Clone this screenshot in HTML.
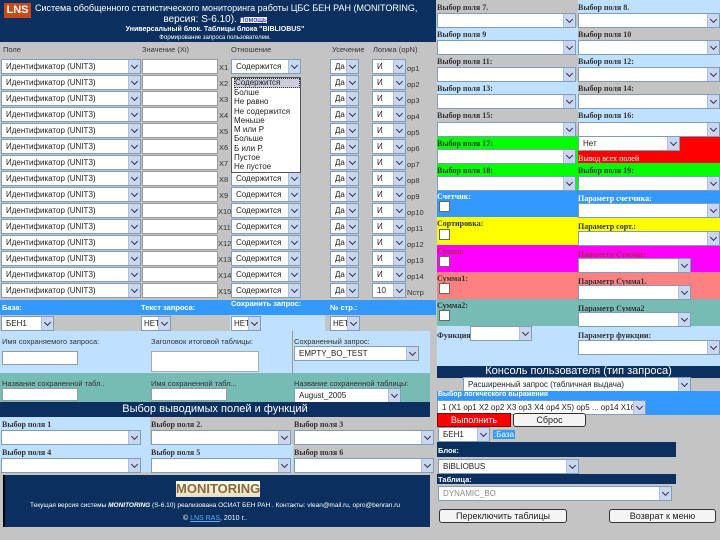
<!DOCTYPE html>
<html><head><meta charset="utf-8"><style>
*{margin:0;padding:0;box-sizing:border-box}
body{width:720px;height:540px;position:relative;overflow:hidden;background:#c4c4c4;font-family:"Liberation Sans","DejaVu Sans",sans-serif;font-size:8px;color:#222}
div,span{position:absolute}
.s{background:#fff;border:1px solid #7f9db9;height:15px;font-size:8px;line-height:13px;padding-left:4px;white-space:nowrap;overflow:hidden;color:#222}
.s i{position:absolute;right:0;top:0;width:12px;height:13px;background:#c8d6f0;border-left:1px solid #b0c0dc}
.s i:after{content:"";position:absolute;left:3px;top:3px;width:4px;height:4px;border-right:1.5px solid #334;border-bottom:1.5px solid #334;transform:rotate(45deg)}
.in{background:#fff;border:1px solid #999;height:15px}
.l{font-size:7.5px;white-space:nowrap;color:#333}
.sf{font-family:"Liberation Serif",serif;font-weight:bold;font-size:8px;color:#333;white-space:nowrap}
.navy{background:#0b2f5e}
.gr{background:#c4c4c4}.lb{background:#c0e0ff}
.cb{background:#fff;border:1px solid #666;width:11px;height:11px}
.btn{background:#f4f4f4;border:1px solid #333;border-radius:3px;font-size:9px;text-align:center;line-height:12px;height:14px}
</style></head><body>
<div class="navy" style="left:0;top:0;width:430px;height:42px"></div>
<div style="left:4px;top:3px;width:27px;height:15px;background:#c84a1a;color:#fff;font-weight:bold;font-size:11px;line-height:15px;text-align:center">LNS</div>
<div style="left:35px;top:3px;color:#fff;font-size:9px;white-space:nowrap">Система обобщенного статистического мониторинга работы ЦБС БЕН РАН (MONITORING,</div>
<div style="left:0;top:14px;width:430px;text-align:center;color:#fff;font-size:10px">версия: S-6.10). <span style="position:static;background:#fff;color:#00c;font-size:7px;text-decoration:underline">Помощь</span></div>
<div style="left:0;top:26px;width:430px;text-align:center;color:#fff;font-size:7px;font-weight:bold">Универсальный блок. Таблицы блока "BIBLIOBUS"</div>
<div style="left:0;top:35px;width:430px;text-align:center;color:#fff;font-size:6px">Формирование запроса пользователем.</div>
<div class="l" style="left:3px;top:45px">Поле</div>
<div class="l" style="left:142px;top:45px">Значение (Xi)</div>
<div class="l" style="left:231px;top:45px">Отношение</div>
<div class="l" style="left:332px;top:45px">Усечение</div>
<div class="l" style="left:373px;top:45px">Логика (opN)</div>

<div style="left:0;top:59px">
<div class="s" style="left:1px;top:0;width:140px">Идентификатор (UNIT3)<i></i></div><div class="in" style="left:142px;top:0;width:76px"></div><div class="l" style="left:219px;top:4px">X1</div><div class="s" style="left:231px;top:0;width:70px">Содержится<i></i></div><div class="s" style="left:330px;top:0;width:29px">Да<i></i></div><div class="s" style="left:372px;top:0;width:34px">И<i></i></div><div class="l" style="left:407px;top:5px">op1</div>
</div>
<div style="left:0;top:75px">
<div class="s" style="left:1px;top:0;width:140px">Идентификатор (UNIT3)<i></i></div><div class="in" style="left:142px;top:0;width:76px"></div><div class="l" style="left:219px;top:4px">X2</div><div class="s" style="left:330px;top:0;width:29px">Да<i></i></div><div class="s" style="left:372px;top:0;width:34px">И<i></i></div><div class="l" style="left:407px;top:5px">op2</div>
</div>
<div style="left:0;top:91px">
<div class="s" style="left:1px;top:0;width:140px">Идентификатор (UNIT3)<i></i></div><div class="in" style="left:142px;top:0;width:76px"></div><div class="l" style="left:219px;top:4px">X3</div><div class="s" style="left:330px;top:0;width:29px">Да<i></i></div><div class="s" style="left:372px;top:0;width:34px">И<i></i></div><div class="l" style="left:407px;top:5px">op3</div>
</div>
<div style="left:0;top:107px">
<div class="s" style="left:1px;top:0;width:140px">Идентификатор (UNIT3)<i></i></div><div class="in" style="left:142px;top:0;width:76px"></div><div class="l" style="left:219px;top:4px">X4</div><div class="s" style="left:330px;top:0;width:29px">Да<i></i></div><div class="s" style="left:372px;top:0;width:34px">И<i></i></div><div class="l" style="left:407px;top:5px">op4</div>
</div>
<div style="left:0;top:123px">
<div class="s" style="left:1px;top:0;width:140px">Идентификатор (UNIT3)<i></i></div><div class="in" style="left:142px;top:0;width:76px"></div><div class="l" style="left:219px;top:4px">X5</div><div class="s" style="left:330px;top:0;width:29px">Да<i></i></div><div class="s" style="left:372px;top:0;width:34px">И<i></i></div><div class="l" style="left:407px;top:5px">op5</div>
</div>
<div style="left:0;top:139px">
<div class="s" style="left:1px;top:0;width:140px">Идентификатор (UNIT3)<i></i></div><div class="in" style="left:142px;top:0;width:76px"></div><div class="l" style="left:219px;top:4px">X6</div><div class="s" style="left:330px;top:0;width:29px">Да<i></i></div><div class="s" style="left:372px;top:0;width:34px">И<i></i></div><div class="l" style="left:407px;top:5px">op6</div>
</div>
<div style="left:0;top:155px">
<div class="s" style="left:1px;top:0;width:140px">Идентификатор (UNIT3)<i></i></div><div class="in" style="left:142px;top:0;width:76px"></div><div class="l" style="left:219px;top:4px">X7</div><div class="s" style="left:330px;top:0;width:29px">Да<i></i></div><div class="s" style="left:372px;top:0;width:34px">И<i></i></div><div class="l" style="left:407px;top:5px">op7</div>
</div>
<div style="left:0;top:171px">
<div class="s" style="left:1px;top:0;width:140px">Идентификатор (UNIT3)<i></i></div><div class="in" style="left:142px;top:0;width:76px"></div><div class="l" style="left:219px;top:4px">X8</div><div class="s" style="left:231px;top:0;width:70px">Содержится<i></i></div><div class="s" style="left:330px;top:0;width:29px">Да<i></i></div><div class="s" style="left:372px;top:0;width:34px">И<i></i></div><div class="l" style="left:407px;top:5px">op8</div>
</div>
<div style="left:0;top:187px">
<div class="s" style="left:1px;top:0;width:140px">Идентификатор (UNIT3)<i></i></div><div class="in" style="left:142px;top:0;width:76px"></div><div class="l" style="left:219px;top:4px">X9</div><div class="s" style="left:231px;top:0;width:70px">Содержится<i></i></div><div class="s" style="left:330px;top:0;width:29px">Да<i></i></div><div class="s" style="left:372px;top:0;width:34px">И<i></i></div><div class="l" style="left:407px;top:5px">op9</div>
</div>
<div style="left:0;top:203px">
<div class="s" style="left:1px;top:0;width:140px">Идентификатор (UNIT3)<i></i></div><div class="in" style="left:142px;top:0;width:76px"></div><div class="l" style="left:218px;top:4px">X10</div><div class="s" style="left:231px;top:0;width:70px">Содержится<i></i></div><div class="s" style="left:330px;top:0;width:29px">Да<i></i></div><div class="s" style="left:372px;top:0;width:34px">И<i></i></div><div class="l" style="left:407px;top:5px">op10</div>
</div>
<div style="left:0;top:219px">
<div class="s" style="left:1px;top:0;width:140px">Идентификатор (UNIT3)<i></i></div><div class="in" style="left:142px;top:0;width:76px"></div><div class="l" style="left:218px;top:4px">X11</div><div class="s" style="left:231px;top:0;width:70px">Содержится<i></i></div><div class="s" style="left:330px;top:0;width:29px">Да<i></i></div><div class="s" style="left:372px;top:0;width:34px">И<i></i></div><div class="l" style="left:407px;top:5px">op11</div>
</div>
<div style="left:0;top:235px">
<div class="s" style="left:1px;top:0;width:140px">Идентификатор (UNIT3)<i></i></div><div class="in" style="left:142px;top:0;width:76px"></div><div class="l" style="left:218px;top:4px">X12</div><div class="s" style="left:231px;top:0;width:70px">Содержится<i></i></div><div class="s" style="left:330px;top:0;width:29px">Да<i></i></div><div class="s" style="left:372px;top:0;width:34px">И<i></i></div><div class="l" style="left:407px;top:5px">op12</div>
</div>
<div style="left:0;top:251px">
<div class="s" style="left:1px;top:0;width:140px">Идентификатор (UNIT3)<i></i></div><div class="in" style="left:142px;top:0;width:76px"></div><div class="l" style="left:218px;top:4px">X13</div><div class="s" style="left:231px;top:0;width:70px">Содержится<i></i></div><div class="s" style="left:330px;top:0;width:29px">Да<i></i></div><div class="s" style="left:372px;top:0;width:34px">И<i></i></div><div class="l" style="left:407px;top:5px">op13</div>
</div>
<div style="left:0;top:267px">
<div class="s" style="left:1px;top:0;width:140px">Идентификатор (UNIT3)<i></i></div><div class="in" style="left:142px;top:0;width:76px"></div><div class="l" style="left:218px;top:4px">X14</div><div class="s" style="left:231px;top:0;width:70px">Содержится<i></i></div><div class="s" style="left:330px;top:0;width:29px">Да<i></i></div><div class="s" style="left:372px;top:0;width:34px">И<i></i></div><div class="l" style="left:407px;top:5px">op14</div>
</div>
<div style="left:0;top:283px">
<div class="s" style="left:1px;top:0;width:140px">Идентификатор (UNIT3)<i></i></div><div class="in" style="left:142px;top:0;width:76px"></div><div class="l" style="left:218px;top:4px">X15</div><div class="s" style="left:231px;top:0;width:70px">Содержится<i></i></div><div class="s" style="left:330px;top:0;width:29px">Да<i></i></div><div class="s" style="left:372px;top:0;width:34px">10<i></i></div><div class="l" style="left:407px;top:5px">Nстр</div>
</div>
<div style="left:231px;top:77px;width:70px;height:96px;background:#fff;border:1px solid #555;font-size:8px;line-height:9.3px;padding-left:2px;color:#222;overflow:hidden">
<span style="position:static;display:block;background:#ccd;border:1px dotted #333;line-height:8px">Содержится</span>Болше<br>Не равно<br>Не содержится<br>Меньше<br>М или Р<br>Больше<br>Б или Р.<br>Пустое<br>Не пустое</div>

<div style="left:0;top:300px;width:430px;height:15px;background:#3399ff"></div>
<div style="left:230px;top:315px;width:95px;height:16px" class="lb"></div>
<div class="l" style="left:2px;top:303px;color:#fff;font-weight:bold">База:</div>
<div class="l" style="left:141px;top:303px;color:#fff;font-weight:bold">Текст запроса:</div>
<div class="l" style="left:231px;top:299px;color:#fff;font-weight:bold">Сохранить запрос:</div>
<div class="l" style="left:330px;top:303px;color:#fff;font-weight:bold">№ стр.:</div>
<div class="s" style="left:1px;top:316px;width:53px">БЕН1<i></i></div>
<div class="s" style="left:141px;top:316px;width:30px;padding-left:2px">НЕТ<i></i></div>
<div class="s" style="left:231px;top:316px;width:30px;padding-left:2px">НЕТ<i></i></div>
<div class="s" style="left:330px;top:316px;width:30px;padding-left:2px">НЕТ<i></i></div>

<div class="lb" style="left:0;top:331px;width:430px;height:42px"></div>
<div style="left:292px;top:331px;width:1px;height:42px;background:#999"></div>
<div class="l" style="left:2px;top:337px">Имя сохраняемого запроса:</div>
<div class="l" style="left:151px;top:337px">Заголовок итоговой таблицы:</div>
<div class="l" style="left:294px;top:337px">Сохраненный запрос:</div>
<div class="in" style="left:2px;top:351px;width:76px;height:14px"></div>
<div class="in" style="left:151px;top:351px;width:108px;height:21px;border-color:#aaa"></div>
<div class="s" style="left:294px;top:346px;width:125px">EMPTY_BO_TEST<i></i></div>

<div style="left:0;top:373px;width:430px;height:29px;background:#77bbb5"></div>
<div class="l" style="left:2px;top:379px">Название сохраненной табл..</div>
<div class="l" style="left:151px;top:379px">Имя сохраненной табл...</div>
<div class="l" style="left:294px;top:379px">Название сохраненной таблицы:</div>
<div class="in" style="left:2px;top:388px;width:76px;height:13px"></div>
<div class="in" style="left:151px;top:388px;width:76px;height:13px"></div>
<div class="s" style="left:294px;top:388px;width:107px">August_2005<i></i></div>

<div class="navy" style="left:0;top:402px;width:430px;height:15px"></div>
<div style="left:0;top:402px;width:430px;text-align:center;color:#fff;font-size:11px;line-height:15px">Выбор выводимых полей и функций</div>
<div class="lb" style="left:0;top:417px;width:150px;height:55px"></div>
<div class="lb" style="left:150px;top:444px;width:143px;height:28px"></div>
<div class="sf" style="left:2px;top:420px">Выбор поля 1</div>
<div class="sf" style="left:151px;top:420px">Выбор поля 2.</div>
<div class="sf" style="left:294px;top:420px">Выбор поля 3</div>
<div class="sf" style="left:2px;top:448px">Выбор поля 4</div>
<div class="sf" style="left:151px;top:448px">Выбор поля 5</div>
<div class="sf" style="left:294px;top:448px">Выбор поля 6</div>
<div class="s" style="left:1px;top:430px;width:140px"><i></i></div>
<div class="s" style="left:151px;top:430px;width:140px"><i></i></div>
<div class="s" style="left:294px;top:430px;width:140px"><i></i></div>
<div class="s" style="left:1px;top:458px;width:140px"><i></i></div>
<div class="s" style="left:151px;top:458px;width:140px"><i></i></div>
<div class="s" style="left:294px;top:458px;width:140px"><i></i></div>

<div class="navy" style="left:3px;top:475px;width:427px;height:52px;border-left:2px solid #000"></div>
<div style="left:176px;top:481px;width:84px;height:16px;background:linear-gradient(#fff,#e8dcc0);color:#8a6a30;font-weight:bold;font-size:13px;line-height:16px;text-align:center">MONITORING</div>
<div style="left:0;top:502px;width:430px;text-align:center;color:#fff;font-size:6.5px;white-space:nowrap">Текущая версия системы <b style="font-style:italic">MONITORING</b> (S-6.10) реализована ОСИАТ БЕН РАН . Контакты: vlean@mail.ru, opro@benran.ru</div>
<div style="left:0;top:515px;width:430px;text-align:center;color:#fff;font-size:7px">© <u style="color:#6af">LNS RAS</u>, 2010 г..</div>

<div class="navy" style="left:430px;top:0;width:6px;height:42px"></div>
<div style="left:430px;top:300px;width:6px;height:15px;background:#3399ff"></div>
<div class="gr" style="left:437px;top:0;width:141px;height:27px"></div><div class="lb" style="left:578px;top:0;width:142px;height:27px"></div>
<div class="lb" style="left:437px;top:27px;width:141px;height:27px"></div><div class="gr" style="left:578px;top:27px;width:142px;height:27px"></div>
<div class="gr" style="left:437px;top:54px;width:141px;height:27px"></div><div class="lb" style="left:578px;top:54px;width:142px;height:27px"></div>
<div class="lb" style="left:437px;top:81px;width:141px;height:27px"></div><div class="gr" style="left:578px;top:81px;width:142px;height:27px"></div>
<div class="gr" style="left:437px;top:108px;width:141px;height:28px"></div><div class="lb" style="left:578px;top:108px;width:142px;height:28px"></div>
<div style="left:437px;top:136px;width:141px;height:27px;background:#00ff00"></div><div style="left:578px;top:136px;width:142px;height:27px;background:#ff0000"></div>
<div style="left:437px;top:163px;width:283px;height:27px;background:#00ff00"></div>
<div style="left:437px;top:190px;width:283px;height:27px;background:#3399ff"></div>
<div style="left:437px;top:217px;width:283px;height:28px;background:#ffff00"></div>
<div style="left:437px;top:245px;width:283px;height:27px;background:#ff00ff"></div>
<div style="left:437px;top:272px;width:283px;height:27px;background:#ff8080"></div>
<div style="left:437px;top:299px;width:283px;height:27px;background:#77bbb5"></div>
<div class="lb" style="left:437px;top:326px;width:283px;height:40px"></div>

<div class="sf" style="left:437px;top:3px">Выбор поля 7.</div><div class="sf" style="left:578px;top:3px">Выбор поля 8.</div>
<div class="sf" style="left:437px;top:30px">Выбор поля 9</div><div class="sf" style="left:578px;top:30px">Выбор поля 10</div>
<div class="sf" style="left:437px;top:57px">Выбор поля 11:</div><div class="sf" style="left:578px;top:57px">Выбор поля 12:</div>
<div class="sf" style="left:437px;top:84px">Выбор поля 13:</div><div class="sf" style="left:578px;top:84px">Выбор поля 14:</div>
<div class="sf" style="left:437px;top:111px">Выбор поля 15:</div><div class="sf" style="left:578px;top:111px">Выбор поля 16:</div>
<div class="sf" style="left:437px;top:139px">Выбор поля 17:</div><div class="sf" style="left:437px;top:166px">Выбор поля 18:</div><div class="sf" style="left:578px;top:166px">Выбор поля 19:</div>
<div class="s" style="left:437px;top:13px;width:139px"><i></i></div><div class="s" style="left:578px;top:13px;width:142px"><i></i></div>
<div class="s" style="left:437px;top:40px;width:139px"><i></i></div><div class="s" style="left:578px;top:40px;width:142px"><i></i></div>
<div class="s" style="left:437px;top:67px;width:139px"><i></i></div><div class="s" style="left:578px;top:67px;width:142px"><i></i></div>
<div class="s" style="left:437px;top:94px;width:139px"><i></i></div><div class="s" style="left:578px;top:94px;width:142px"><i></i></div>
<div class="s" style="left:437px;top:122px;width:139px"><i></i></div><div class="s" style="left:578px;top:122px;width:142px"><i></i></div>
<div class="s" style="left:437px;top:149px;width:139px"><i></i></div>
<div class="s" style="left:578px;top:136px;width:102px">Нет<i></i></div>
<div class="sf" style="left:578px;top:154px;color:#fff;font-weight:normal">Вывод всех полей</div>
<div class="s" style="left:437px;top:176px;width:139px"><i></i></div><div class="s" style="left:578px;top:176px;width:142px"><i></i></div>
<div class="sf" style="left:437px;top:192px;color:#fff">Счетчик:</div><div class="sf" style="left:578px;top:194px;color:#fff">Параметр счетчика:</div>
<div class="cb" style="left:439px;top:201px"></div><div class="s" style="left:578px;top:203px;width:142px"><i></i></div>
<div class="sf" style="left:437px;top:219px">Сортировка:</div><div class="sf" style="left:578px;top:222px">Параметр сорт.:</div>
<div class="cb" style="left:439px;top:229px"></div><div class="s" style="left:578px;top:231px;width:142px"><i></i></div>
<div class="sf" style="left:437px;top:247px;color:#933">Сумма:</div><div class="sf" style="left:578px;top:250px;color:#933">Параметр Суммы:</div>
<div class="cb" style="left:439px;top:256px"></div><div class="s" style="left:578px;top:258px;width:113px"><i></i></div>
<div class="sf" style="left:437px;top:274px">Сумма1:</div><div class="sf" style="left:578px;top:277px">Параметр Сумма1.</div>
<div class="cb" style="left:439px;top:283px"></div><div class="s" style="left:578px;top:285px;width:113px"><i></i></div>
<div class="sf" style="left:437px;top:301px">Сумма2:</div><div class="sf" style="left:578px;top:304px">Параметр Сумма2</div>
<div class="cb" style="left:439px;top:310px"></div><div class="s" style="left:578px;top:312px;width:113px"><i></i></div>
<div class="sf" style="left:437px;top:331px">Функция:</div><div class="s" style="left:470px;top:326px;width:62px"><i></i></div>
<div class="sf" style="left:578px;top:331px">Параметр функции:</div><div class="s" style="left:578px;top:340px;width:142px"><i></i></div>

<div class="navy" style="left:437px;top:366px;width:283px;height:12px"></div>
<div style="left:437px;top:365px;width:283px;text-align:center;color:#fff;font-size:11px;line-height:13px">Консоль пользователя (тип запроса)</div>
<div class="s" style="left:463px;top:377px;width:228px">Расширенный запрос (табличная выдача)<i></i></div>
<div style="left:437px;top:391px;width:283px;height:24px;background:#3399ff"></div>
<div class="l" style="left:438px;top:391px;color:#fff;font-size:7px;font-weight:bold">Выбор логического выражения</div>
<div class="s" style="left:437px;top:400px;width:209px">1 (X1 op1 X2 op2 X3 op3 X4 op4 X5) op5 ... op14 X16)<i></i></div>
<div style="left:437px;top:413px;width:74px;height:14px;background:#ff0000;border:1px solid #800;color:#fff;font-size:9px;text-align:center;line-height:12px">Выполнить</div>
<div class="btn" style="left:513px;top:413px;width:73px">Сброс</div>
<div class="s" style="left:438px;top:427px;width:52px">БЕН1<i></i></div>
<div style="left:493px;top:430px;background:#3399ff;color:#fff;font-size:8px;padding:0 1px">:База</div>
<div class="navy" style="left:437px;top:442px;width:239px;height:15px"></div>
<div class="l" style="left:438px;top:446px;color:#fff;font-weight:bold">Блок:</div>
<div class="s" style="left:438px;top:459px;width:141px">BIBLIOBUS<i></i></div>
<div class="navy" style="left:437px;top:474px;width:239px;height:10px"></div>
<div class="l" style="left:438px;top:475px;color:#fff;font-weight:bold">Таблица:</div>
<div class="s" style="left:438px;top:486px;width:234px;color:#888">DYNAMIC_BO<i></i></div>
<div class="btn" style="left:439px;top:509px;width:128px">Переключить таблицы</div>
<div class="btn" style="left:609px;top:509px;width:107px">Возврат к меню</div>
</body></html>
